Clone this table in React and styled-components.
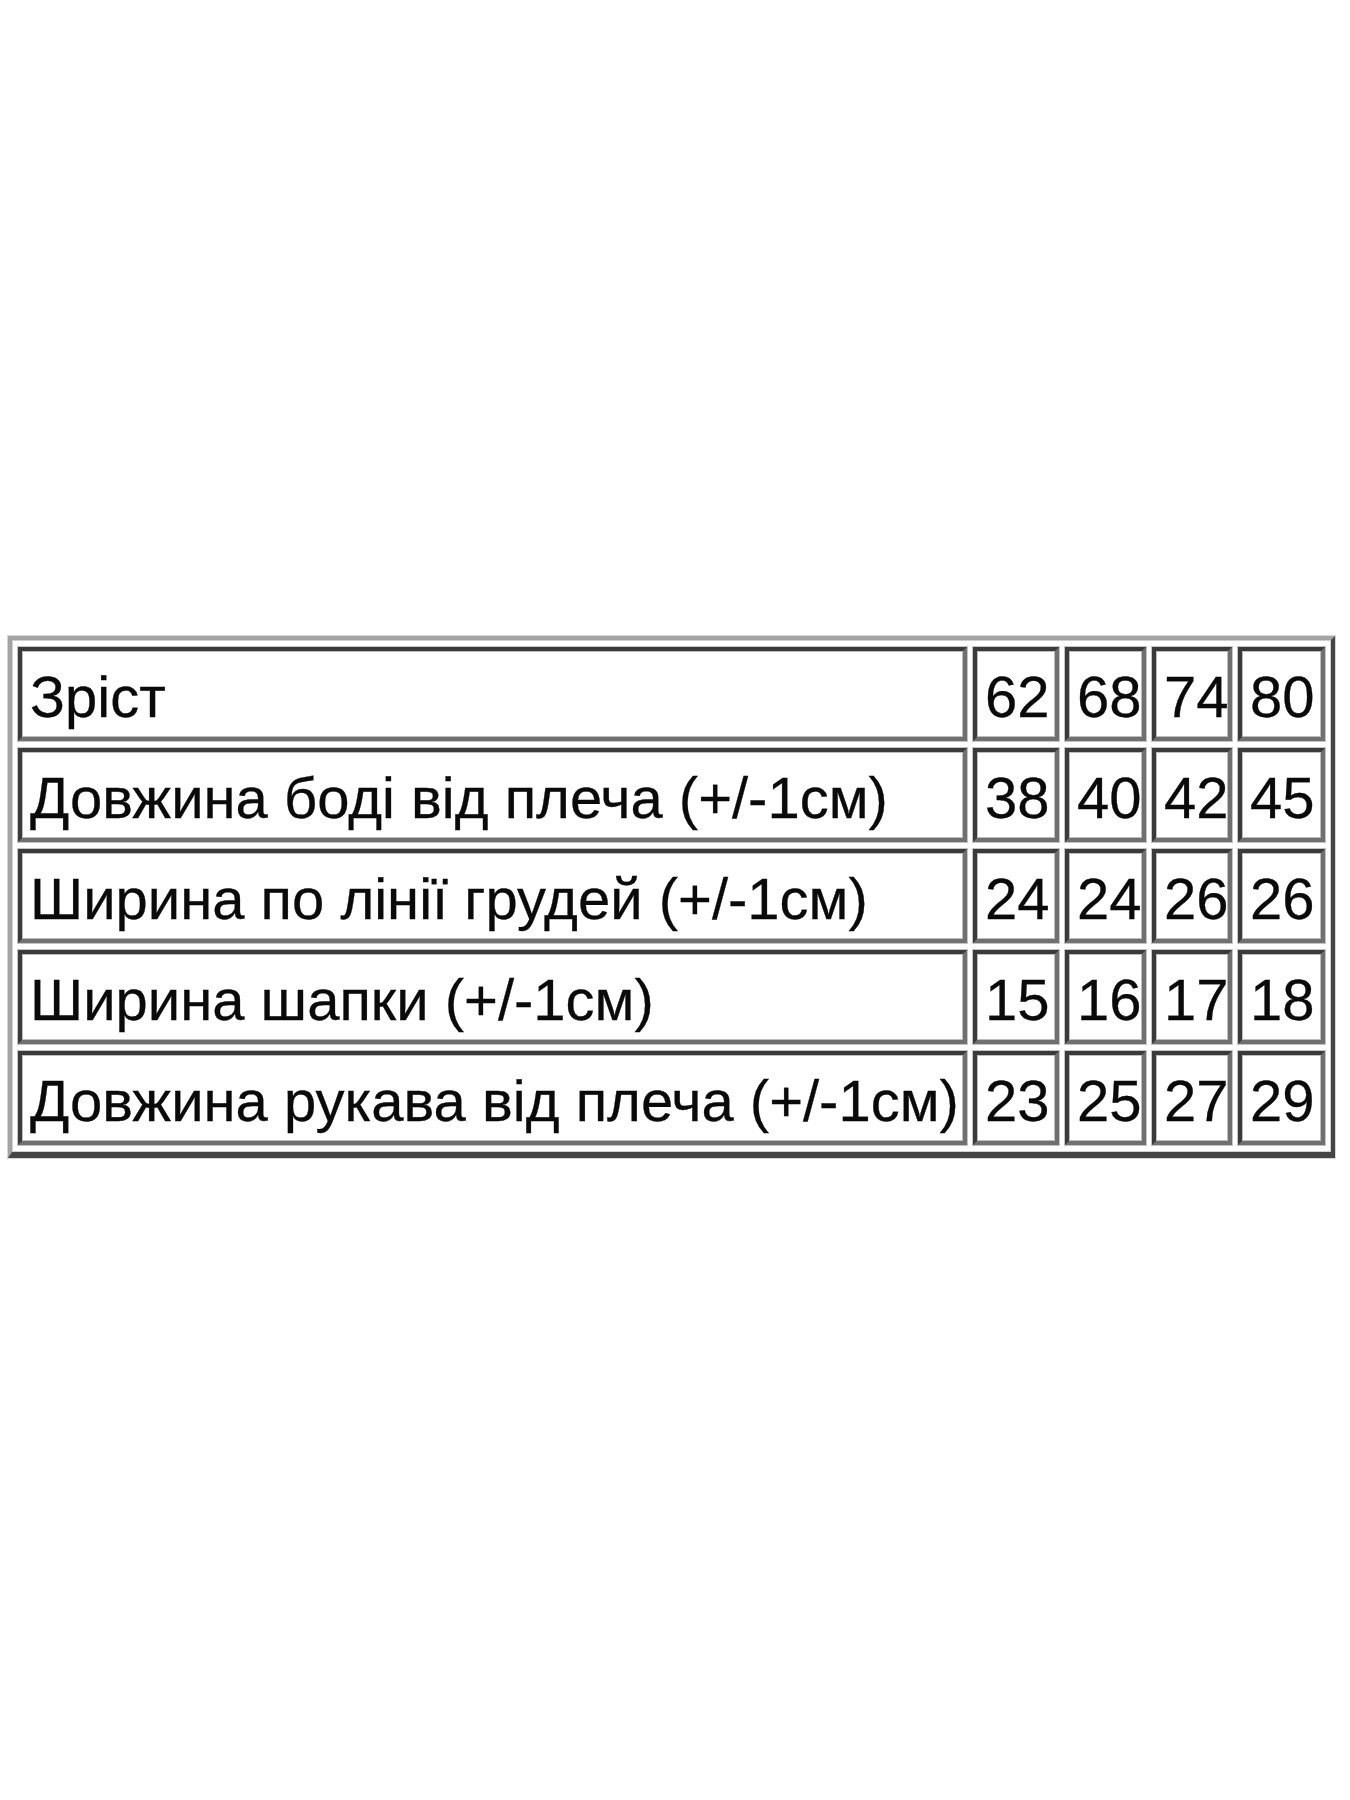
import React from "react";
import styled, { createGlobalStyle } from "styled-components";

const Global = createGlobalStyle`
  html, body { margin: 0; padding: 0; background: #ffffff; }
  #root { width: 1350px; height: 1800px; background: #ffffff; }
`;

const Page = styled.div`
  width: 1350px;
  height: 1800px;
  display: flex;
  flex-direction: column;
  justify-content: flex-start;
  padding-top: 636px;
  padding-left: 8px;
  box-sizing: border-box;
`;

const SizeTable = styled.table`
  border-collapse: separate;
  border-spacing: 6px 7px;
  border-style: solid;
  border-width: 4px 4px 6px 4px;
  border-color: #a4a4a4 #454545 #454545 #a4a4a4;
  box-shadow: 0 0 0 1px #d6d6d6, inset 0 0 0 1px #d0d0d0;
  table-layout: fixed;
  width: 1327px;
  font-family: "Liberation Sans", Arial, sans-serif;
  font-size: 58px;
  color: #0a0a0a;
`;

const Cell = styled.td`
  height: 79px;
  width: ${(p) => p.$w}px;
  box-sizing: content-box;
  padding: 7px 0 0 8px;
  border-style: solid;
  border-width: 4px;
  border-color: #3a3a3a #707070 #707070 #3a3a3a;
  box-shadow: 0 0 0 1px #c4c4c4, inset 0 0 0 1px #bdbdbd;
  white-space: nowrap;
  overflow: visible;
  vertical-align: middle;
  text-align: left;
  line-height: 1.15;
  -webkit-text-stroke: 0.3px #0a0a0a;
`;

const widths = [933, 70, 65, 64, 71];

const rows = [
  ["Зріст", "62", "68", "74", "80"],
  ["Довжина боді від плеча (+/-1см)", "38", "40", "42", "45"],
  ["Ширина по лінії грудей (+/-1см)", "24", "24", "26", "26"],
  ["Ширина шапки (+/-1см)", "15", "16", "17", "18"],
  ["Довжина рукава від плеча (+/-1см)", "23", "25", "27", "29"],
];

export default function App() {
  return (
    <>
      <Global />
      <Page>
        <SizeTable>
          <tbody>
            {rows.map((r, i) => (
              <tr key={i}>
                {r.map((c, j) => (
                  <Cell key={j} $w={widths[j]}>
                    {c}
                  </Cell>
                ))}
              </tr>
            ))}
          </tbody>
        </SizeTable>
      </Page>
    </>
  );
}
